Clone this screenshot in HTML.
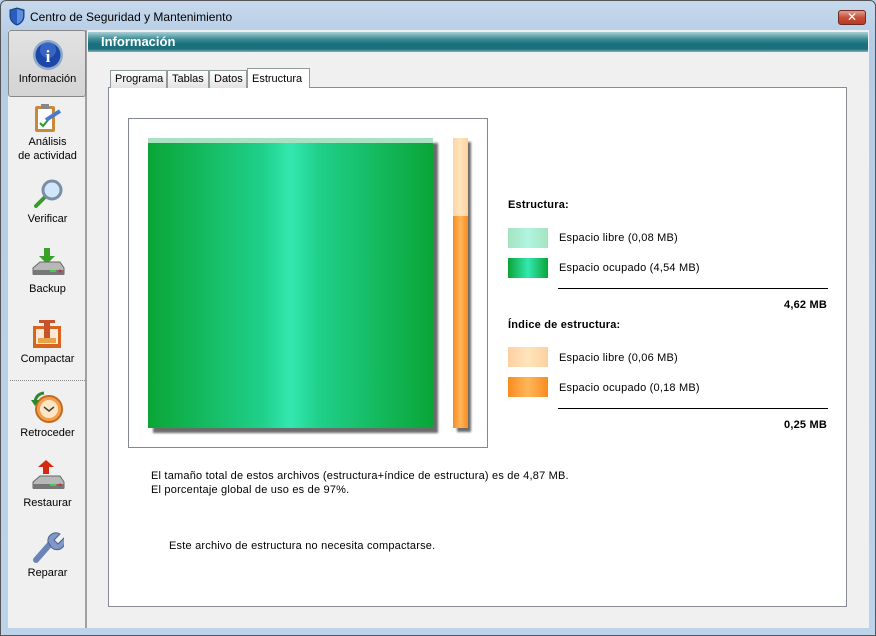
<!DOCTYPE html>
<html><head><meta charset="utf-8"><style>
*{margin:0;padding:0;box-sizing:border-box}
body{width:876px;height:636px;overflow:hidden;font-family:"Liberation Sans","DejaVu Sans",sans-serif;font-size:11px;color:#000;background:#b9d1ea;position:relative}
.abs{position:absolute}
#frame{left:0;top:0;width:876px;height:636px;background:linear-gradient(#c7d9ec,#b4cce6 40px,#bcd3ea);border:1px solid #555;border-radius:6px 6px 0 0}
#title{left:30px;top:10px;font-size:12px;color:#000}
#close{left:838px;top:10px;width:28px;height:15px;border:1px solid #6d2a22;border-radius:3px;background:linear-gradient(#e0a090,#c8503a 50%,#b83a22);color:#fff;font-weight:bold;font-size:12px;text-align:center;line-height:13px}
#client{left:8px;top:30px;width:861px;height:598px;background:#f0f0f0}
#side{left:8px;top:30px;width:79px;height:598px;background:#f0f0f0;border-right:2px solid #a0a0a0}
.item{position:absolute;left:0;width:79px;text-align:center;font-size:11px;color:#000;line-height:14px}
#sel{left:8px;top:30px;width:78px;height:67px;border:1px solid #888;border-radius:3px;background:linear-gradient(#e2e2e2,#d4d4d4)}
#hdr{left:88px;top:32px;width:780px;height:20px;background:linear-gradient(#a9d0d4,#3d8d97 35%,#18707d 60%,#1d6f7c 85%,#7fb3ba);color:#fff;font-weight:bold;font-size:13px;padding-left:13px;line-height:19px}
.tab{position:absolute;top:70px;height:18px;border:1px solid #919b9c;border-bottom:none;background:linear-gradient(#fff,#e3e3e3);font-size:11px;line-height:16px;padding:0 4px}
#panel{left:108px;top:87px;width:739px;height:520px;background:#fff;border:1px solid #898c95}
#chart{left:128px;top:118px;width:360px;height:330px;border:1px solid #828790;background:#fff}
.lbl{position:absolute;font-size:11px;letter-spacing:.2px}
.b{font-weight:bold}
</style></head><body>
<div id="frame" class="abs"></div>
<svg class="abs" style="left:9px;top:7px" width="16" height="19" viewBox="0 0 16 19"><path d="M8 1 L15 3 V9 C15 14 11 17 8 18 C5 17 1 14 1 9 V3Z" fill="#2a5dbb" stroke="#173d80"/><path d="M8 2 L14 4 V9 C14 13 11 16 8 17Z" fill="#5c8fe0"/></svg>
<div id="title" class="abs">Centro de Seguridad y Mantenimiento</div>
<div id="close" class="abs">✕</div>
<div id="client" class="abs"></div>
<div id="side" class="abs"></div>
<div id="sel" class="abs"></div>
<div class="abs" style="left:8px;top:30px;width:79px;height:598px">
 <svg class="abs" style="left:24px;top:9px" width="32" height="32"><circle cx="16" cy="16" r="15" fill="#8fa9c8"/><circle cx="16" cy="16" r="12.5" fill="#1b47a8"/><circle cx="16" cy="11" r="8" fill="#4c7ad6" opacity=".6"/><text x="16" y="23" font-size="17" font-weight="bold" fill="#fff" text-anchor="middle" font-family="Liberation Serif">i</text></svg>
 <div class="item" style="top:42px">Información</div>
 <svg class="abs" style="left:24px;top:72px" width="32" height="32"><rect x="3" y="4" width="20" height="26" rx="2" fill="#c88a3a"/><rect x="6" y="7" width="14" height="20" fill="#fff"/><rect x="9" y="2" width="8" height="5" fill="#888"/><path d="M8 21 l3 3 l5 -6" stroke="#2a9a2a" stroke-width="2" fill="none"/><path d="M14 18 L28 9" stroke="#4a7ad0" stroke-width="4"/></svg>
 <div class="item" style="top:105px">Análisis<br>de actividad</div>
 <svg class="abs" style="left:24px;top:148px" width="32" height="32"><path d="M4 28 L14 18" stroke="#3a9a2a" stroke-width="4" stroke-linecap="round"/><circle cx="20" cy="12" r="9" fill="#cfe6fb" stroke="#7a8ea8" stroke-width="3"/></svg>
 <div class="item" style="top:182px">Verificar</div>
 <svg class="abs" style="left:22px;top:218px" width="36" height="32"><path d="M14 0h6v8h5l-8 8l-8-8h5z" fill="#3aa02a"/><path d="M3 20 L10 14 H30 L34 20 V26 H3Z" fill="#b8b8b8" stroke="#666"/><rect x="3" y="22" width="31" height="5" fill="#777"/><rect x="20" y="22" width="6" height="2" fill="#4c4"/><circle cx="30" cy="23" r="1.5" fill="#c33"/></svg>
 <div class="item" style="top:252px">Backup</div>
 <svg class="abs" style="left:23px;top:288px" width="32" height="32"><rect x="2" y="8" width="28" height="22" fill="#d9641e"/><rect x="5" y="11" width="22" height="15" fill="#fbe9d6"/><rect x="7" y="20" width="18" height="5" fill="#e8a24a"/><rect x="13" y="5" width="6" height="15" fill="#c8522a"/><rect x="8" y="2" width="16" height="3" fill="#c8522a"/></svg>
 <div class="item" style="top:322px">Compactar</div>
 <div class="abs" style="left:2px;top:350px;width:75px;border-top:1px dotted #888"></div>
 <svg class="abs" style="left:22px;top:360px" width="34" height="34"><circle cx="19" cy="19" r="13" fill="#f2a050" stroke="#c56a1a" stroke-width="2"/><circle cx="19" cy="19" r="9" fill="#fde6c6"/><path d="M14 17 l5 4 l5 -4" stroke="#444" stroke-width="1.5" fill="none"/><path d="M14 3 Q6 4 5 12" stroke="#2a8a2a" stroke-width="3" fill="none"/><path d="M1 10 L5 16 L9 10Z" fill="#2a8a2a"/></svg>
 <div class="item" style="top:396px">Retroceder</div>
 <svg class="abs" style="left:22px;top:430px" width="36" height="34"><path d="M16 0 L24 7 H19 V14 H13 V7 H8Z" fill="#d42a10"/><path d="M3 22 L10 16 H30 L34 22 V28 H3Z" fill="#b8b8b8" stroke="#666"/><rect x="3" y="24" width="31" height="5" fill="#777"/><rect x="20" y="24" width="6" height="2" fill="#4c4"/><circle cx="30" cy="25" r="1.5" fill="#c33"/></svg>
 <div class="item" style="top:466px">Restaurar</div>
 <svg class="abs" style="left:24px;top:500px" width="32" height="34"><path d="M4 30 L18 14" stroke="#6a84b8" stroke-width="6" stroke-linecap="round"/><path d="M16 12 A8 8 0 0 1 28 4 L22 10 L26 14 L32 8 A8 8 0 0 1 20 18Z" fill="#7f98c8" stroke="#4a5f8a"/></svg>
 <div class="item" style="top:536px">Reparar</div>
</div>
<div id="hdr" class="abs">Información</div>
<div id="panel" class="abs"></div>
<div class="tab" style="left:110px;width:57px">Programa</div>
<div class="tab" style="left:167px;width:42px">Tablas</div>
<div class="tab" style="left:209px;width:38px">Datos</div>
<div class="tab" style="left:247px;top:68px;height:20px;width:63px;background:#fff;line-height:20px">Estructura</div>
<div id="chart" class="abs"></div>
<div class="abs" style="left:153px;top:143px;width:285px;height:290px;background:#3a3a3a;opacity:.75;filter:blur(1px)"></div>
<div class="abs" style="left:148px;top:138px;width:285px;height:5px;background:#a9e2c0"></div>
<div class="abs" style="left:148px;top:143px;width:285px;height:285px;background:linear-gradient(90deg,#0aa536,#1fd08a 40%,#33e8b0 50%,#1fd08a 60%,#0aa536)"></div>
<div class="abs" style="left:457px;top:142px;width:14px;height:290px;background:#3a3a3a;opacity:.75;filter:blur(1px)"></div>
<div class="abs" style="left:453px;top:138px;width:15px;height:78px;background:linear-gradient(90deg,#fdd6a8,#ffe4bb 50%,#fdd0a0)"></div>
<div class="abs" style="left:453px;top:216px;width:15px;height:212px;background:linear-gradient(90deg,#f98c20,#ffb55a 50%,#f98c20)"></div>
<div class="lbl b" style="left:508px;top:199px">Estructura:</div>
<div class="abs" style="left:508px;top:228px;width:40px;height:20px;background:linear-gradient(90deg,#a6e3c0,#b0f5e0 50%,#a6e3c0)"></div>
<div class="lbl" style="left:559px;top:232px">Espacio libre (0,08 MB)</div>
<div class="abs" style="left:508px;top:258px;width:40px;height:20px;background:linear-gradient(90deg,#0aa536,#33e8b0 50%,#0aa536)"></div>
<div class="lbl" style="left:559px;top:262px">Espacio ocupado (4,54 MB)</div>
<div class="abs" style="left:558px;top:288px;width:270px;border-top:1px solid #000"></div>
<div class="lbl b" style="left:784px;top:299px">4,62 MB</div>
<div class="lbl b" style="left:508px;top:319px">Índice de estructura:</div>
<div class="abs" style="left:508px;top:347px;width:40px;height:20px;background:linear-gradient(90deg,#fdd0a0,#ffe4bb 50%,#fdd0a0)"></div>
<div class="lbl" style="left:559px;top:352px">Espacio libre (0,06 MB)</div>
<div class="abs" style="left:508px;top:377px;width:40px;height:20px;background:linear-gradient(90deg,#f98c20,#ffb55a 50%,#f98c20)"></div>
<div class="lbl" style="left:559px;top:382px">Espacio ocupado (0,18 MB)</div>
<div class="abs" style="left:558px;top:408px;width:270px;border-top:1px solid #000"></div>
<div class="lbl b" style="left:784px;top:419px">0,25 MB</div>
<div class="lbl" style="left:151px;top:469px;line-height:14px">El tamaño total de estos archivos (estructura+índice de estructura) es de 4,87 MB.<br>El porcentaje global de uso es de 97%.</div>
<div class="lbl" style="left:169px;top:540px">Este archivo de estructura no necesita compactarse.</div>
</body></html>
